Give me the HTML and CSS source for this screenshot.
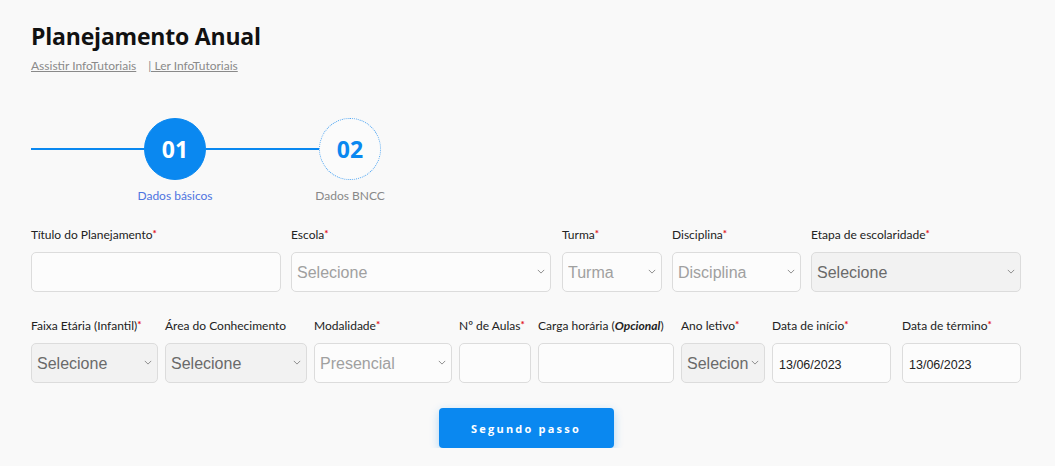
FILE: index.html
```html
<!DOCTYPE html>
<html lang="pt-BR">
<head>
    <meta charset="UTF-8">
    <meta name="viewport" content="width=device-width, initial-scale=1.0">
    <title>Planejamento Anual</title>
    <link rel="stylesheet" href="styles.css">
</head>
<body>
    <div class="page">
        <!-- Header -->
        <div class="header">
            <h1>Planejamento Anual</h1>
            <div class="tutorials">
                <a href="#">Assistir InfoTutoriais</a>
                <a href="#" class="second">| Ler InfoTutoriais</a>
            </div>
        </div>

        <!-- Stepper -->
        <div class="stepper">
            <div class="step-line"></div>
            <div class="step active">
                <div class="step-circle">01</div>
                <div class="step-label">Dados básicos</div>
            </div>
            <div class="step-line"></div>
            <div class="step">
                <div class="step-circle">02</div>
                <div class="step-label">Dados BNCC</div>
            </div>
        </div>

        <!-- Row 1 -->
        <div class="form-row row-one">
            <div class="field w-titulo">
                <label>Título do Planejamento<span class="req">*</span></label>
                <input type="text" class="control">
            </div>
            <div class="field w-escola">
                <label>Escola<span class="req">*</span></label>
                <div class="select">
                    <select class="control placeholder"><option>Selecione</option></select>
                    <svg class="chevron" viewBox="0 0 10 6"><path d="M1 1l4 4 4-4"/></svg>
                </div>
            </div>
            <div class="field w-turma">
                <label>Turma<span class="req">*</span></label>
                <div class="select">
                    <select class="control placeholder"><option>Turma</option></select>
                    <svg class="chevron" viewBox="0 0 10 6"><path d="M1 1l4 4 4-4"/></svg>
                </div>
            </div>
            <div class="field w-disciplina">
                <label>Disciplina<span class="req">*</span></label>
                <div class="select">
                    <select class="control placeholder"><option>Disciplina</option></select>
                    <svg class="chevron" viewBox="0 0 10 6"><path d="M1 1l4 4 4-4"/></svg>
                </div>
            </div>
            <div class="field w-etapa">
                <label>Etapa de escolaridade<span class="req">*</span></label>
                <div class="select">
                    <select class="control" disabled><option>Selecione</option></select>
                    <svg class="chevron" viewBox="0 0 10 6"><path d="M1 1l4 4 4-4"/></svg>
                </div>
            </div>
        </div>

        <!-- Row 2 -->
        <div class="form-row row-two">
            <div class="field w-faixa">
                <label>Faixa Etária (Infantil)<span class="req">*</span></label>
                <div class="select">
                    <select class="control" disabled><option>Selecione</option></select>
                    <svg class="chevron" viewBox="0 0 10 6"><path d="M1 1l4 4 4-4"/></svg>
                </div>
            </div>
            <div class="field w-area">
                <label>Área do Conhecimento</label>
                <div class="select">
                    <select class="control" disabled><option>Selecione</option></select>
                    <svg class="chevron" viewBox="0 0 10 6"><path d="M1 1l4 4 4-4"/></svg>
                </div>
            </div>
            <div class="field w-modalidade">
                <label>Modalidade<span class="req">*</span></label>
                <div class="select">
                    <select class="control placeholder"><option>Presencial</option></select>
                    <svg class="chevron" viewBox="0 0 10 6"><path d="M1 1l4 4 4-4"/></svg>
                </div>
            </div>
            <div class="field w-aulas">
                <label>Nº de Aulas<span class="req">*</span></label>
                <input type="text" class="control">
            </div>
            <div class="field w-carga">
                <label>Carga horária (<em>Opcional</em>)</label>
                <input type="text" class="control">
            </div>
            <div class="field w-ano">
                <label>Ano letivo<span class="req">*</span></label>
                <div class="select">
                    <select class="control" disabled><option>Selecione</option></select>
                    <svg class="chevron" viewBox="0 0 10 6"><path d="M1 1l4 4 4-4"/></svg>
                </div>
            </div>
            <div class="field w-data">
                <label>Data de início<span class="req">*</span></label>
                <input type="text" class="control date" value="13/06/2023">
            </div>
            <div class="field w-data last">
                <label>Data de término<span class="req">*</span></label>
                <input type="text" class="control date" value="13/06/2023">
            </div>
        </div>

        <div class="actions">
            <button class="btn-next">Segundo passo</button>
        </div>
    </div>
</body>
</html>
```

FILE: styles.css
```css
body {
    margin: 0;
    background-color: #f9f9f9;
    font-family: Lato, "Open Sans", sans-serif;
    color: #333;
}

.page {
    padding: 20px 34px 0 31px;
}

/* Header */
.header h1 {
    margin: 0;
    font-family: "Open Sans", sans-serif;
    font-size: 23px;
    line-height: 32px;
    font-weight: 700;
    color: #111;
    letter-spacing: -0.2px;
}

.tutorials {
    margin-top: 6px;
    font-size: 12px;
}

.tutorials a {
    color: #8a8a8a;
    text-decoration: underline;
}

.tutorials .second {
    margin-left: 9px;
}

/* Stepper */
.stepper {
    display: flex;
    align-items: flex-start;
    margin-top: 45px;
    height: 84px;
}

.step-line {
    width: 113px;
    height: 2px;
    margin-top: 30px;
    background-color: #0a88f0;
}

.step {
    width: 62px;
    display: flex;
    flex-direction: column;
    align-items: center;
}

.step-circle {
    width: 60px;
    height: 60px;
    border-radius: 50%;
    border: 1px dotted #4aa3f2;
    background-color: #fbfbfb;
    color: #0a88f0;
    font-family: "Open Sans", sans-serif;
    font-size: 23px;
    font-weight: 700;
    display: flex;
    align-items: center;
    justify-content: center;
}

.step.active .step-circle {
    border: 1px solid #0a88f0;
    background-color: #0a88f0;
    color: #fff;
}

.step-label {
    margin-top: 8px;
    font-size: 12px;
    white-space: nowrap;
    color: #888;
}

.step.active .step-label {
    color: #4e74e0;
}

/* Form */
.form-row {
    display: flex;
    gap: 10px;
    margin-top: 25px;
}

.row-two {
    gap: 7px;
    margin-top: 26px;
}

.field label {
    display: block;
    height: 17px;
    margin-bottom: 8px;
    font-size: 12px;
    color: #222;
    white-space: nowrap;
}

.field label em {
    font-weight: 700;
}

.req {
    color: #e0101a;
    font-size: 10px;
    font-weight: 700;
    vertical-align: top;
}

.w-titulo { width: 250px; }
.w-escola { width: 260px; }
.w-turma { width: 100px; margin-left: 1px; }
.w-disciplina { width: 129px; }
.w-etapa { width: 210px; }

.w-faixa { width: 127px; }
.w-area { width: 142px; }
.w-modalidade { width: 138px; }
.w-aulas { width: 72px; }
.w-carga { width: 136px; }
.w-ano { width: 84px; }
.w-data { width: 119px; }
.w-data.last { margin-left: 4px; }

.control {
    display: block;
    box-sizing: border-box;
    width: 100%;
    height: 40px;
    margin: 0;
    padding: 0 5px;
    border: 1px solid #dcdcdc;
    border-radius: 5px;
    background-color: #fcfcfc;
    font-family: "Liberation Sans", Arial, sans-serif;
    font-size: 16px;
    color: #555;
    outline: none;
}

select.control {
    appearance: none;
    -webkit-appearance: none;
    padding-right: 16px;
    opacity: 1;
}

select.control.placeholder {
    color: #a0a0a0;
}

select.control:disabled {
    background-color: #f2f2f2;
    color: #6a6a6a;
}

.control.date {
    margin-top: 1px;
    padding-top: 4px;
    padding-left: 6px;
    font-size: 12.5px;
    color: #222;
}

.select {
    position: relative;
}

.chevron {
    position: absolute;
    right: 6px;
    top: 17px;
    width: 8px;
    height: 5px;
    fill: none;
    stroke: #8a8a8a;
    stroke-width: 1.2;
}

/* Button */
.actions {
    display: flex;
    justify-content: center;
    margin-top: 25px;
}

.btn-next {
    width: 175px;
    height: 40px;
    border: none;
    border-radius: 4px;
    background-color: #0a88f0;
    color: #fff;
    font-family: "Open Sans", sans-serif;
    font-size: 11px;
    font-weight: 700;
    letter-spacing: 2.2px;
    box-shadow: 0 3px 10px rgba(10, 136, 240, 0.3);
    cursor: pointer;
}
```
